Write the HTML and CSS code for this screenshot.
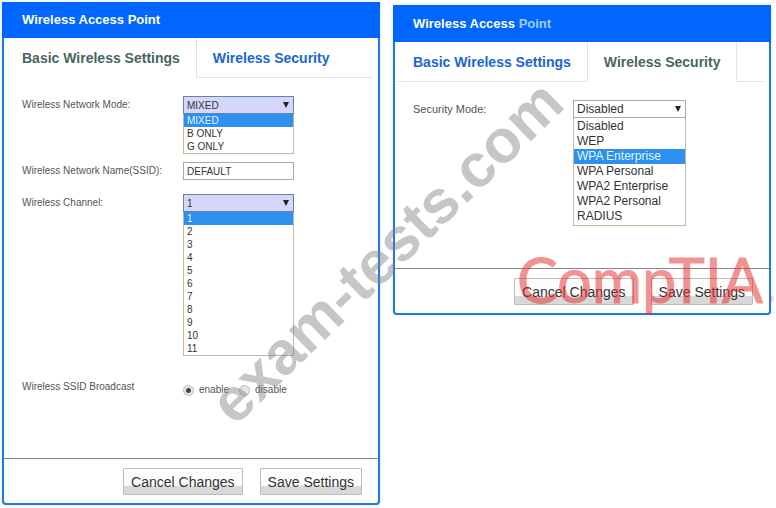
FILE: index.html
```
<!DOCTYPE html>
<html lang="en">
<head>
<meta charset="UTF-8">
<title>Wireless Access Point</title>
<link rel="stylesheet" href="styles.css">
</head>

<body>
<div class="page">

	<!-- basic settings -->
	<form class="panel">
		<h1 class="title">Wireless Access Point</h1>
		<div class="tabs">
			<a href="#basic" class="tab on">Basic Wireless Settings</a>
			<a href="#security" class="tab last">Wireless Security</a>
		</div>
		<div class="fields">
			<label for="mode">Wireless Network Mode:</label>
			<div class="drop open">
				<div class="box">
					<select id="mode"><option>MIXED</option><option>B ONLY</option><option>G ONLY</option></select>
				</div>
				<ul class="list">
					<li class="sel">MIXED</li>
					<li>B ONLY</li>
					<li>G ONLY</li>
				</ul>
			</div>

			<label for="ssid">Wireless Network Name(SSID):</label>
			<input type="text" id="ssid" class="text" value="DEFAULT">

			<label for="channel" class="gap">Wireless Channel:</label>
			<div class="drop open gap">
				<div class="box">
					<select id="channel"><option>1</option><option>2</option><option>3</option><option>4</option><option>5</option><option>6</option><option>7</option><option>8</option><option>9</option><option>10</option><option>11</option></select>
				</div>
				<ul class="list">
					<li class="sel">1</li>
					<li>2</li>
					<li>3</li>
					<li>4</li>
					<li>5</li>
					<li>6</li>
					<li>7</li>
					<li>8</li>
					<li>9</li>
					<li>10</li>
					<li>11</li>
				</ul>
			</div>

			<span class="name">Wireless SSID Broadcast</span>
			<div class="radios">
				<label><input type="radio" name="broadcast" checked>enable</label>
				<label><input type="radio" name="broadcast">disable</label>
			</div>
		</div>
		<div class="buttons">
			<button type="reset">Cancel Changes</button>
			<button type="button">Save Settings</button>
		</div>
	</form>

	<!-- security -->
	<form class="panel security">
		<h1 class="title">Wireless Access <span>Point</span></h1>
		<div class="tabs">
			<a href="#basic" class="tab">Basic Wireless Settings</a>
			<a href="#security" class="tab on">Wireless Security</a>
			<span class="rest"></span>
		</div>
		<div class="fields">
			<label for="security-mode">Security Mode:</label>
			<div class="drop">
				<div class="box">
					<select id="security-mode"><option>Disabled</option><option>WEP</option><option>WPA Enterprise</option><option>WPA Personal</option><option>WPA2 Enterprise</option><option>WPA2 Personal</option><option>RADIUS</option></select>
				</div>
				<ul class="list">
					<li>Disabled</li>
					<li>WEP</li>
					<li class="sel">WPA Enterprise</li>
					<li>WPA Personal</li>
					<li>WPA2 Enterprise</li>
					<li>WPA2 Personal</li>
					<li>RADIUS</li>
				</ul>
			</div>
		</div>
		<div class="buttons">
			<button type="reset">Cancel Changes</button>
			<button type="button">Save Settings</button>
		</div>
	</form>

	<svg class="marks" width="776" height="508" viewBox="0 0 776 508">
		<text class="site" transform="translate(235 427) rotate(-44)">exam-tests.com</text>
		<text class="brand" x="517" y="303">CompTIA</text>
		<text class="reg" x="769" y="302">®</text>
	</svg>
</div>
</body>
</html>
```

FILE: styles.css
```
*{ box-sizing:border-box;}
body{ margin:0; background:#fff; font-family:"Liberation Sans", Arial, sans-serif; font-size:10px; color:#555;}
.page{ position:relative; display:grid; grid-template-columns:1fr 1fr; gap:13px; align-items:start; padding:2px 5px 2px 2px;}

.panel{ border:2px solid #2277e0; border-radius:2px 2px 4px 4px; background:#fff; box-shadow:0 0 3px #c4e2ff;}
.security{ margin-top:3px;}
.title{ margin:-2px -2px 0; padding:0 20px; height:36px; line-height:35px; background:#06f; color:#fff; font-size:13px;}
.security .title{ height:37px; line-height:37px;}
.title span{ color:#a5cbff;}

.tabs{ display:flex; height:40px; padding-right:5px; line-height:40px; font-size:14px; font-weight:bold;}
.tab{ padding:0 16px 0 18px; color:#1a66d2; text-decoration:none; border-bottom:1px solid #e2e2e2;}
.tab.on{ color:#47665f; border-bottom:none;}
.tab.last{ flex:1; padding-left:16px; border-left:1px solid #e2e2e2;}
.security .tabs{ padding-left:2px;}
.security .tab{ padding:0 16px;}
.security .tab.on{ border:solid #e2e2e2; border-width:0 1px;}
.rest{ flex:1; border-bottom:1px solid #e2e2e2;}

.fields{ display:grid; grid-template-columns:161px 111px; row-gap:8px; align-items:start; padding:18px 18px 59px; line-height:12px;}
.fields > label, .name{ padding-top:3px; white-space:nowrap;}
.fields > .gap{ margin-top:6px;}
.box{ position:relative; height:18px;}
.box:after{ content:""; position:absolute; right:5px; top:6px; border:solid transparent; border-width:6px 3px 0; border-top-color:#222; pointer-events:none;}
select, .text{ display:block; width:100%; height:18px; margin:0; padding:0 3px; border:1px solid #aaa; border-radius:0; background:#fff; font-family:inherit; font-size:inherit; color:#333; appearance:none;}
.open select{ border-color:#6483ab; background:#d6d6fa;}
.list{ margin:0; padding:0; border:1px solid #c4b89c; border-top:none; background:#fff; list-style:none; color:#333;}
.list li{ height:13px; padding-left:3px; line-height:13px;}
.list .sel{ background:#2d8fef; color:#e4f5ff;}

.fields > .name, .radios{ padding-top:17px;}
.radios{ display:flex; gap:10px;}
.radios label{ display:flex; align-items:center; gap:5px; height:18px;}
.radios input{ appearance:none; width:11px; height:11px; margin:0; border:1px solid #bbb; border-radius:50%; background:#e6e6e6;}
.radios input:checked{ background:radial-gradient(#444 0 2px, #e6e6e6 3px);}

.buttons{ display:flex; justify-content:flex-end; gap:17px; padding:9px 16px 8px; border-top:1px solid #888;}
button{ height:27px; margin:0; padding:0 7px; border:1px solid #bbb; border-radius:1px; background:linear-gradient(#fcfcfc 0 67%, #d8d8d8 67%); font-family:inherit; font-size:14px; color:#333;}

.security .fields{ grid-template-columns:160px 113px; padding:18px 18px 42px; font-size:11px;}
.security .drop{ font-size:12px;}
.security .list{ padding:1px 0;}
.security .list li{ height:15px; line-height:15px;}

/* watermark and logo lie over both panels */
.marks{ position:absolute; left:0; top:0; pointer-events:none;}
.site{ font-size:61px; font-weight:bold; fill:#808080; fill-opacity:.45;}
.brand{ font-family:Lato, sans-serif; font-size:61px; fill:#e62a2a; stroke:#e62a2a; stroke-width:1px; opacity:.5;}
.reg{ font-size:7px; fill:#e62a2a; fill-opacity:.6;}
```
